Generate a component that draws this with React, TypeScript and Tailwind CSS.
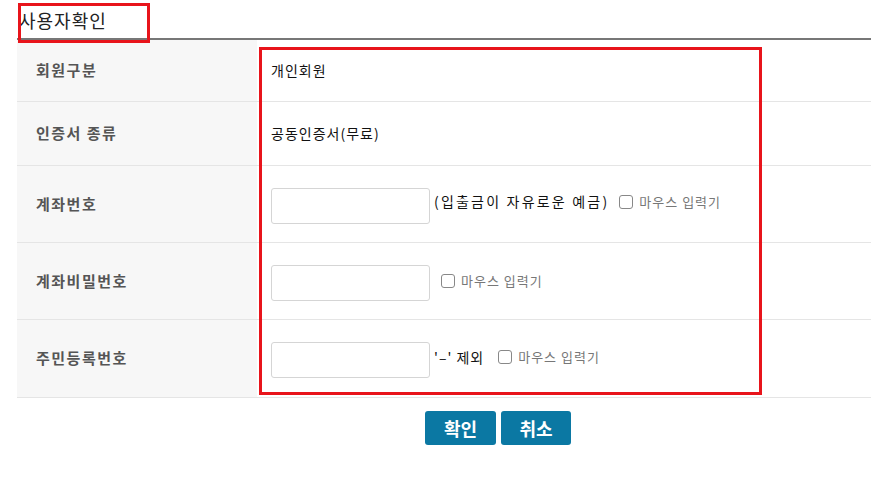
import React from 'react';

const font = { fontFamily: '"Noto Sans CJK KR", "Noto Sans", sans-serif' };

const MouseInput: React.FC = () => (
  <label className="flex items-center gap-[6px] text-[13px] text-[#777] tracking-[1px]">
    <span className="w-[14px] h-[14px] border border-[#888] rounded-[3px] bg-white" />
    마우스 입력기
  </label>
);

const Input: React.FC = () => (
  <input
    type="text"
    className="w-[159px] h-[36px] border border-[#d5d5d5] rounded-[3px] bg-white outline-none"
  />
);

const Row: React.FC<{ label: string; h: string; children: React.ReactNode }> = ({ label, h, children }) => (
  <div className={`grid grid-cols-[240px_1fr] border-b border-[#e5e5e5] ${h}`}>
    <div className="bg-[#f7f7f7] flex items-center pl-[19px] text-[15px] font-bold text-[#555] tracking-[1.5px]">
      {label}
    </div>
    <div className="flex items-center pl-[14px] pt-[3px] text-[14px] text-[#111] tracking-[1px]">{children}</div>
  </div>
);

const App: React.FC = () => {
  return (
    <div className="relative w-[871px] h-[479px] bg-white" style={font}>
      {/* Title */}
      <div className="ml-[17px] h-[40px] border-b-2 border-[#777] pl-[2px] pt-[7px]">
        <h1 className="text-[18px] text-[#222] leading-[26px] tracking-[1px]">사용자확인</h1>
      </div>

      {/* Table */}
      <div className="ml-[17px]">
        <Row label="회원구분" h="h-[62px]">
          <span className="-mt-[3px]">개인회원</span>
        </Row>
        <Row label="인증서 종류" h="h-[64px]">
          <span className="-mt-[3px]">공동인증서(무료)</span>
        </Row>
        <Row label="계좌번호" h="h-[77px]">
          <Input />
          <span className="ml-[4px] mr-[10px] tracking-[2.2px] -mt-[8px]">(입출금이 자유로운 예금)</span>
          <div className="-mt-[8px]">
            <MouseInput />
          </div>
        </Row>
        <Row label="계좌비밀번호" h="h-[77px]">
          <Input />
          <div className="ml-[11px] -mt-[4px]">
            <MouseInput />
          </div>
        </Row>
        <Row label="주민등록번호" h="h-[78px]">
          <Input />
          <span className="ml-[4px] mr-[14px] -mt-[6px]">'–' 제외</span>
          <div className="-mt-[6px]">
            <MouseInput />
          </div>
        </Row>
      </div>

      {/* Buttons */}
      <div className="flex gap-[5px] mt-[13px] ml-[425px]">
        <button className="w-[71px] h-[34px] rounded-[3px] bg-[#0b78a3] text-white text-[18px] font-bold">확인</button>
        <button className="w-[70px] h-[34px] rounded-[3px] bg-[#0b78a3] text-white text-[18px] font-bold">취소</button>
      </div>

      {/* Annotation boxes */}
      <div className="absolute left-[18px] top-[3px] w-[132px] h-[40px] border-[3px] border-[#e8141b] pointer-events-none" />
      <div className="absolute left-[259px] top-[47px] w-[503px] h-[348px] border-[3px] border-[#e8141b] pointer-events-none" />
    </div>
  );
};

export default App;
